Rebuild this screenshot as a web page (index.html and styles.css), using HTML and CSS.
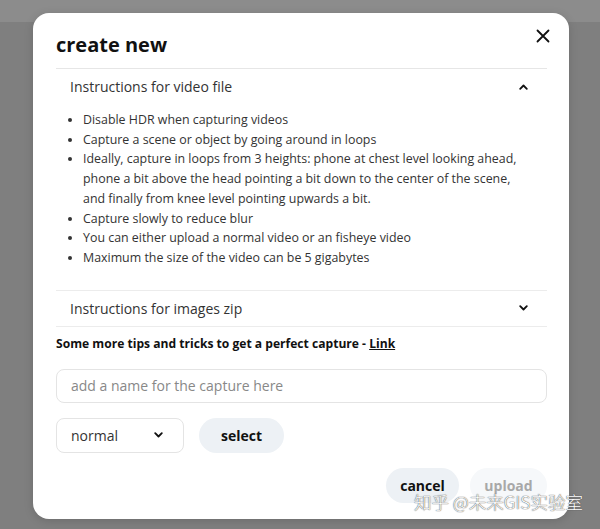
FILE: index.html
```html
<!DOCTYPE html>
<html>
<head>
<meta charset="utf-8">
<link rel="stylesheet" href="styles.css">
</head>
<body>
<div class="modal">
  <div class="head">
    <h1 class="title">create new</h1>
    <button class="close" aria-label="close">
      <svg width="14" height="14" viewBox="0 0 14 14"><path d="M1.5 1.5 L12.5 12.5 M12.5 1.5 L1.5 12.5" stroke="#111" stroke-width="1.8" stroke-linecap="round"/></svg>
    </button>
  </div>
  <div class="acc">
    <div class="acc-head">
      <span>Instructions for video file</span>
      <svg class="chev" width="9" height="6" viewBox="0 0 9 6"><path d="M1.2 4.8 L4.5 1.5 L7.8 4.8" fill="none" stroke="#111" stroke-width="1.8" stroke-linecap="round" stroke-linejoin="round"/></svg>
    </div>
    <ul class="acc-body">
      <li>Disable HDR when capturing videos</li>
      <li>Capture a scene or object by going around in loops</li>
      <li>Ideally, capture in loops from 3 heights: phone at chest level looking ahead, phone a bit above the head pointing a bit down to the center of the scene, and finally from knee level pointing upwards a bit.</li>
      <li>Capture slowly to reduce blur</li>
      <li>You can either upload a normal video or an fisheye video</li>
      <li>Maximum the size of the video can be 5 gigabytes</li>
    </ul>
    <div class="acc-head second">
      <span>Instructions for images zip</span>
      <svg class="chev" width="9" height="6" viewBox="0 0 9 6"><path d="M1.2 1.2 L4.5 4.5 L7.8 1.2" fill="none" stroke="#111" stroke-width="1.8" stroke-linecap="round" stroke-linejoin="round"/></svg>
    </div>
  </div>
  <p class="tips">Some more tips and tricks to get a perfect capture - <a href="#">Link</a></p>
  <div class="input">add a name for the capture here</div>
  <div class="row">
    <div class="select">
      <span>normal</span>
      <svg width="9" height="6" viewBox="0 0 9 6"><path d="M1.2 1.2 L4.5 4.5 L7.8 1.2" fill="none" stroke="#111" stroke-width="1.8" stroke-linecap="round" stroke-linejoin="round"/></svg>
    </div>
    <button class="btn">select</button>
  </div>
  <div class="actions">
    <button class="btn">cancel</button>
    <button class="btn disabled">upload</button>
  </div>
</div>
<div class="watermark">知乎 @未来GIS实验室</div>
</body>
</html>
```
FILE: styles.css
```css
html, body {
  margin: 0;
  padding: 0;
}
body {
  width: 600px;
  height: 529px;
  overflow: hidden;
  background: linear-gradient(#8c8c8c 0, #8c8c8c 22px, #7f7f7f 22px);
  font-family: "Open Sans", "Noto Sans", sans-serif;
  color: #222;
  position: relative;
  padding-top: 13px;
  box-sizing: border-box;
}
.modal {
  margin-left: 33px;
  width: 536px;
  height: 506px;
  box-sizing: border-box;
  background: #fff;
  border-radius: 16px;
  padding: 19px 22px 16px 23px;
  box-shadow: 0 2px 10px rgba(0,0,0,0.15);
}
.head {
  display: flex;
  justify-content: space-between;
  align-items: flex-start;
  height: 36px;
  border-bottom: 1px solid #e6e6e6;
}
.title {
  margin: 0;
  font-size: 20px;
  line-height: 26px;
  font-weight: 700;
  color: #111;
}
.close {
  border: 0;
  background: none;
  padding: 0;
  margin-top: -3px;
  margin-right: -3px;
  width: 14px;
  height: 14px;
  display: flex;
}
.acc-head {
  display: flex;
  justify-content: space-between;
  align-items: center;
  height: 35px;
  padding: 0 19px 0 14px;
  font-size: 14px;
  color: #333;
}
.acc-head.second {
  border-top: 1px solid #ececec;
  border-bottom: 1px solid #ececec;
}
.acc-body {
  margin: 0;
  padding: 6px 27px 22px 27px;
  font-size: 12.4px;
  line-height: 19.7px;
  color: #333;
}
.tips {
  margin: 8px 0 0;
  font-size: 12.1px;
  line-height: 18px;
  font-weight: 700;
  color: #111;
}
.tips a {
  color: #111;
}
.input {
  margin-top: 16px;
  height: 34px;
  box-sizing: border-box;
  border: 1px solid #e4e4e4;
  border-radius: 8px;
  padding: 0 14px;
  display: flex;
  align-items: center;
  font-size: 14px;
  color: #888;
}
.row {
  margin-top: 15px;
  display: flex;
  gap: 15px;
}
.select {
  width: 128px;
  height: 35px;
  box-sizing: border-box;
  border: 1px solid #e4e4e4;
  border-radius: 8px;
  padding: 0 20px 0 14px;
  display: flex;
  justify-content: space-between;
  align-items: center;
  font-size: 14px;
  color: #333;
}
.btn {
  height: 35px;
  border: 0;
  border-radius: 18px;
  background: #edf1f5;
  padding: 0 21px;
  font-family: inherit;
  font-size: 14px;
  font-weight: 700;
  color: #111;
}
.row .btn {
  width: 85px;
}
.actions {
  margin-top: 15px;
  display: flex;
  justify-content: flex-end;
  gap: 11px;
}
.actions .btn {
  width: 73px;
  padding: 0;
}
.actions .btn.disabled {
  width: 77px;
  background: #f6f8fa;
  color: #a8a8a8;
}
.watermark {
  position: absolute;
  left: 414px;
  top: 490px;
  font-family: "Noto Sans CJK SC", sans-serif;
  font-size: 17.5px;
  font-weight: 300;
  line-height: 24px;
  color: #fff;
  text-shadow: 0 0 1px #555, 0 0 1px #555;
}
```
